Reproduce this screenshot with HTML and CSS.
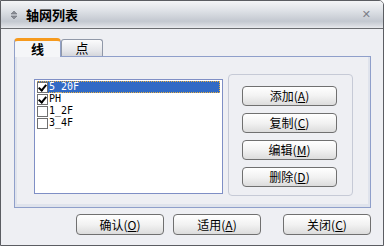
FILE: index.html
```html
<!DOCTYPE html>
<html lang="zh-CN">
<head>
	<meta charset="UTF-8">
	<title>轴网列表</title>
	<link rel="stylesheet" href="styles.css">
</head>
<body>
<div class="window">
	<div class="titlebar">
		<svg class="ticon" width="8" height="10" viewBox="0 0 8 10">
			<path d="M1 4 L4 1 L7 4 Z M1 6 L4 9 L7 6 Z" fill="#8a8e96" stroke="#6d7178" stroke-width="0.6"/>
		</svg>
		<span class="title">轴网列表</span>
		<span class="close">✕</span>
	</div>
	<div class="content">
		<div class="tabs">
			<div class="tab active">线</div>
			<div class="tab">点</div>
		</div>
		<div class="panel">
			<ul class="listbox">
				<li class="sel"><span class="chk on"></span><span class="txt">5_20F</span></li>
				<li><span class="chk on"></span><span class="txt">PH</span></li>
				<li><span class="chk"></span><span class="txt">1_2F</span></li>
				<li><span class="chk"></span><span class="txt">3_4F</span></li>
			</ul>
			<div class="group">
				<button class="btn">添加(<u>A</u>)</button>
				<button class="btn">复制(<u>C</u>)</button>
				<button class="btn">编辑(<u>M</u>)</button>
				<button class="btn">删除(<u>D</u>)</button>
			</div>
		</div>
		<div class="footer">
			<button class="btn wide">确认(<u>O</u>)</button>
			<button class="btn wide">适用(<u>A</u>)</button>
			<button class="btn wide far">关闭(<u>C</u>)</button>
		</div>
	</div>
</div>
</body>
</html>
```

FILE: styles.css
```css
body{
	margin: 0;
	font-family: "Noto Sans CJK SC", sans-serif;
	font-size: 12px;
}
.window{
	width: 384px;
	height: 246px;
	box-sizing: border-box;
	border: 1px solid #5b5d62;
	border-top-right-radius: 5px;
	background: #eeeff3;
	display: flex;
	flex-direction: column;
}
.titlebar{
	height: 27px;
	border-bottom: 1px solid #6a6c70;
	background: linear-gradient(#f4f5f7 0%, #dfe2e7 35%, #c3c8d0 75%, #d6d9df 90%, #e8eaee 100%);
	border-top-right-radius: 4px;
	display: flex;
	align-items: center;
	padding-left: 9px;
}
.ticon{
	margin-right: 8px;
}
.title{
	font-weight: 700;
	font-size: 13px;
	letter-spacing: 0;
	color: #000;
}
.close{
	margin-left: auto;
	margin-right: 12px;
	color: #7c8088;
	font-size: 11px;
	font-weight: 700;
	font-family: "DejaVu Sans", sans-serif;
}
.content{
	padding: 9px 12px 0 13px;
}
.tabs{
	display: flex;
	align-items: flex-end;
	height: 18px;
}
.tab{
	box-sizing: border-box;
	width: 42px;
	height: 17px;
	border: 1px solid #9098a8;
	border-bottom: none;
	border-radius: 3px 3px 0 0;
	background: linear-gradient(#fbfbfc, #e4e5e9 70%, #d4d6db);
	text-align: center;
	line-height: 16px;
	font-size: 13px;
}
.tab.active{
	width: 47px;
	height: 19px;
	margin-bottom: -1px;
	position: relative;
	border-color: #91a0c8;
	border-top: 3px solid #f69a1e;
	background: #f5f6f8;
	font-weight: 700;
	line-height: 15px;
	border-radius: 4px 4px 0 0;
}
.panel{
	width: 357px;
	height: 152px;
	box-sizing: border-box;
	border: 1px solid #8f9fca;
	box-shadow: inset 2px 0 0 #dfe3ec, inset -2px 0 0 #dfe3ec, inset 0 -3px 0 #dfe3ec;
	background: #eeeff3;
	display: flex;
	align-items: flex-start;
	padding: 17px 17px 0 19px;
	gap: 5px;
}
.listbox{
	margin: 5px 0 0;
	padding: 1px 2px;
	list-style: none;
	width: 189px;
	height: 115px;
	box-sizing: border-box;
	border: 1px solid #7f8fc5;
	background: #fff;
}
.listbox li{
	height: 12px;
	display: flex;
	align-items: center;
	font-family: "DejaVu Sans Mono", monospace;
	font-size: 10px;
	box-sizing: border-box;
}
.listbox li.sel{
	background: #316ac5;
	outline: 1px dotted #e8b040;
	outline-offset: -1px;
	color: #fff;
}
.chk{
	width: 11px;
	height: 11px;
	box-sizing: border-box;
	border: 1px solid #707070;
	background: #fff;
	margin-right: 1px;
	position: relative;
}
.chk.on::after{
	content: "";
	position: absolute;
	left: 2px;
	top: 0px;
	width: 3px;
	height: 6px;
	border: solid #000;
	border-width: 0 2px 2px 0;
	transform: rotate(40deg);
}
.txt{
	line-height: 12px;
}
.group{
	width: 125px;
	height: 122px;
	box-sizing: border-box;
	border: 1px solid #c6cad6;
	border-radius: 4px;
	display: flex;
	flex-direction: column;
	align-items: flex-start;
	padding: 11px 0 0 13px;
	gap: 7px;
}
.btn{
	width: 95px;
	height: 20px;
	box-sizing: border-box;
	border: 1px solid #707070;
	border-radius: 4px;
	background: linear-gradient(#ffffff, #f2f2f2 50%, #dcdcdc);
	font-family: "Noto Sans CJK SC", sans-serif;
	font-size: 12px;
	line-height: 16px;
	padding: 0;
	color: #000;
}
.footer{
	display: flex;
	padding-top: 6px;
	padding-left: 62px;
	gap: 9px;
}
.btn.wide{
	width: 89px;
	height: 21px;
}
.btn.far{
	margin-left: 13px;
}
```
